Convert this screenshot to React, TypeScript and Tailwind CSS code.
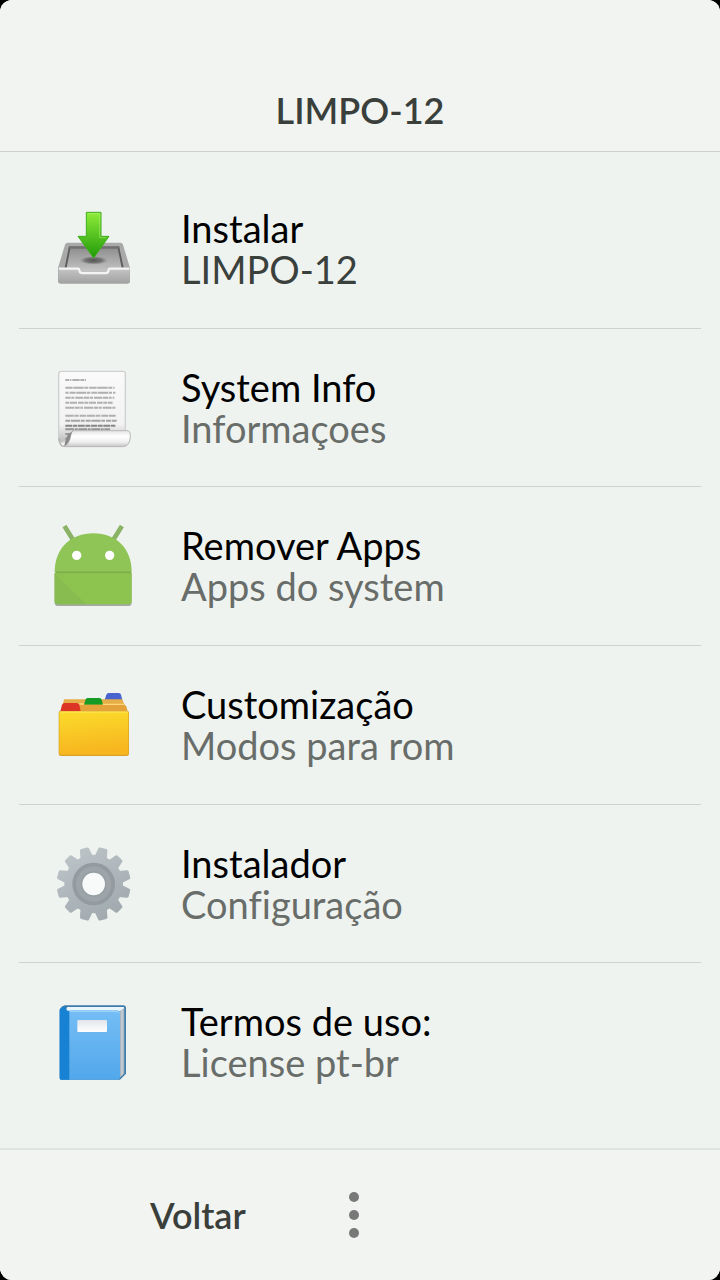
import type { ReactNode } from "react";

function InstallIcon() {
  return (
    <svg viewBox="30 15 264 264" className="size-22 shrink-0" aria-hidden="true">
      <defs>
        <linearGradient id="tray" x1="0" y1="0" x2="0" y2="1">
          <stop offset="0" stopColor="#8b8b8b" />
          <stop offset="1" stopColor="#c4c4c4" />
        </linearGradient>
        <linearGradient id="trayFront" x1="0" y1="0" x2="0" y2="1">
          <stop offset="0" stopColor="#c6c6c6" />
          <stop offset="1" stopColor="#a2a2a2" />
        </linearGradient>
        <linearGradient id="arrow" x1="0" y1="0" x2="0" y2="1">
          <stop offset="0" stopColor="#8fec3a" />
          <stop offset="1" stopColor="#1f9a08" />
        </linearGradient>
        <radialGradient id="trayShade">
          <stop offset="0" stopColor="#555" />
          <stop offset="0.6" stopColor="#666" stopOpacity="0.8" />
          <stop offset="1" stopColor="#888" stopOpacity="0" />
        </radialGradient>
      </defs>
      <path d="M82 128H242Q247 128 249 134L270 204V243Q270 251 262 251H62Q54 251 54 243V204L75 134Q77 128 82 128Z" fill="#a9a9a9" />
      <path d="M87 139H237L251 206H206L200 214H124L118 206H74Z" fill="url(#tray)" />
      <path d="M87 139L92 140L80 203H74ZM237 139L232 140L245 203H251Z" fill="#5c5c5c" />
      <path d="M87 139H237L239 146H86Z" fill="#707070" />
      <ellipse cx="161" cy="181" rx="43" ry="13" fill="url(#trayShade)" />
      <path d="M56 204H116Q120 204 121 214Q121 220 127 220H197Q203 220 203 213Q204 204 209 204H269V243Q269 250 262 250H62Q55 250 55 243Z" fill="url(#trayFront)" />
      <path d="M57 206H115Q118 207 119 214Q120 219 127 219H197Q204 219 205 213Q206 206 210 206H268" fill="none" stroke="#f4f4f4" strokeWidth="7" />
      <path d="M139 37H183V109H207L161 174L114 109H139Z" fill="url(#arrow)" stroke="#3fae1c" strokeWidth="3" strokeLinejoin="round" />
      <path d="M143 41H179V113H199" fill="none" stroke="#b6f77c" strokeOpacity="0.5" strokeWidth="3" />
    </svg>
  );
}

function DocumentIcon() {
  return (
    <svg viewBox="30 11 264 264" className="size-22 shrink-0" aria-hidden="true">
      <defs>
        <linearGradient id="curl" x1="0" y1="0" x2="0" y2="1">
          <stop offset="0" stopColor="#e4e4e4" />
          <stop offset="0.35" stopColor="#fff" />
          <stop offset="0.7" stopColor="#f0f0f0" />
          <stop offset="1" stopColor="#c4c4c4" />
        </linearGradient>
        <linearGradient id="paper" x1="0" y1="0" x2="0" y2="1">
          <stop offset="0" stopColor="#fafafa" />
          <stop offset="0.75" stopColor="#f2f2f2" />
          <stop offset="1" stopColor="#bcbcbc" />
        </linearGradient>
      </defs>
      <path d="M64 33H250Q256 33 256 39V235H85Q56 258 56 232V41Q56 33 64 33Z" fill="url(#paper)" stroke="#d0d0d0" strokeWidth="4" />
      <g fill="none" stroke="#b0b0b0" strokeWidth="6">
        <path d="M76 59H138" strokeDasharray="11 2 5 3 22 2" />
        <path d="M76 82H224" strokeDasharray="22 2 31 2 12 3" />
        <path d="M76 97H226" strokeDasharray="10 3 18 2 30 2" />
        <path d="M76 112H223" strokeDasharray="16 2 9 3 24 2" />
        <path d="M76 127H218" strokeDasharray="12 2 21 3 17 2" />
        <path d="M76 142H226" strokeDasharray="27 2 14 2 8 3" />
        <path d="M76 166H227" strokeDasharray="25 2 13 3 20 2" />
        <path d="M76 181H230" strokeDasharray="15 2 28 2 11 3" stroke="#a4a4a4" />
        <path d="M76 196H226" strokeDasharray="20 2 14 2" stroke="#858585" />
        <path d="M76 207H210" strokeDasharray="26 2 9 2" stroke="#959595" />
        <path d="M76 221H96M76 235H90" stroke="#999" />
      </g>
      <path d="M99 211H265Q272 214 271 229Q270 259 247 259H72Q87 252 91 231Q93 215 99 211Z" fill="url(#curl)" stroke="#b8b8b8" strokeWidth="3" />
      <path d="M73 258Q87 249 91 230Q93 216 99 211L85 222Q76 235 73 258Z" fill="#888" />
      <path d="M57 233Q58 259 73 258" fill="none" stroke="#b0b0b0" strokeWidth="4" />
    </svg>
  );
}

function AndroidIcon() {
  return (
    <svg viewBox="30 22 264 264" className="size-22 shrink-0" aria-hidden="true">
      <path d="M44 176H275V264Q275 274 264 274H55Q44 274 44 264Z" fill="#a5aaa2" />
      <path d="M77 40L98 74M242 40L221 74" stroke="#8bb365" strokeWidth="14" strokeLinecap="square" />
      <path d="M44 172C44 101 92 56 160 56S275 101 275 172Z" fill="#8fc556" />
      <path d="M44 175H275V259Q275 269 264 269H55Q44 269 44 259Z" fill="#8dc450" />
      <path d="M44 175L138 269H55Q44 269 44 259Z" fill="#88bb50" />
      <path d="M46 173H274" stroke="#7dae4b" strokeWidth="5" />
      <circle cx="110" cy="122" r="14" fill="#fff" />
      <circle cx="209" cy="122" r="14" fill="#fff" />
    </svg>
  );
}

function FolderIcon() {
  return (
    <svg viewBox="30 3 264 264" className="size-22 shrink-0" aria-hidden="true">
      <defs>
        <linearGradient id="folder" x1="0" y1="0" x2="0.15" y2="1">
          <stop offset="0" stopColor="#fbdc2b" />
          <stop offset="1" stopColor="#f7b51f" />
        </linearGradient>
      </defs>
      <path d="M194 60L199 44Q201 39 206 39H236Q242 39 243 44L247 60Z" fill="#4864cf" />
      <path d="M72 58H247L254 76H68Z" fill="#e6ae47" />
      <path d="M132 74L137 58Q139 54 144 54H178Q184 54 185 59L189 74Z" fill="#149b26" />
      <path d="M68 74H254Q260 76 263 95H62Z" fill="#e3a23a" />
      <path d="M70 72H132M188 73H252" stroke="#ffd778" strokeWidth="4" />
      <path d="M61 94L66 74Q68 69 74 69H110Q117 69 118 74L122 94Z" fill="#dc3526" />
      <path d="M60 93H263Q267 93 267 98V221Q267 228 260 228H63Q56 228 56 221V98Q56 93 60 93Z" fill="#d8a128" />
      <path d="M62 95H262Q265 95 265 99V219Q265 224 260 224H63Q58 224 58 219V99Q58 95 62 95Z" fill="url(#folder)" />
      <path d="M60 96H263" stroke="#ffea61" strokeWidth="3" />
    </svg>
  );
}

const TEETH = [15, 45, 75, 105, 135, 165, 195, 225, 255, 285, 315, 345];

function GearIcon() {
  return (
    <svg viewBox="30 15 264 264" className="size-22 shrink-0" aria-hidden="true">
      <defs>
        <linearGradient id="gear" gradientUnits="userSpaceOnUse" x1="100" y1="40" x2="220" y2="255">
          <stop offset="0" stopColor="#bcc4c8" />
          <stop offset="1" stopColor="#9fa8ad" />
        </linearGradient>
        <mask id="gearMask" maskUnits="userSpaceOnUse" x="30" y="15" width="264" height="264">
          <circle cx="161" cy="147" r="88" fill="#fff" />
          {TEETH.map((angle) => (
            <path
              key={angle}
              d="M142 66L147 40Q148 36 152 36H170Q174 36 175 40L180 66Z"
              transform={`rotate(${angle} 161 147)`}
              fill="#fff"
            />
          ))}
          <circle cx="161" cy="147" r="34" fill="#000" />
        </mask>
      </defs>
      <circle cx="161" cy="147" r="36" fill="#f8faf9" />
      <g mask="url(#gearMask)">
        <rect x="30" y="15" width="264" height="264" fill="url(#gear)" />
        <circle cx="161" cy="147" r="64" fill="#929b9f" />
        <circle cx="161" cy="147" r="53" fill="#9ea5a9" />
        <circle cx="161" cy="147" r="38" fill="#949da1" />
      </g>
    </svg>
  );
}

function BookIcon() {
  return (
    <svg viewBox="30 9 264 264" className="size-22 shrink-0" aria-hidden="true">
      <defs>
        <linearGradient id="cover" x1="0" y1="0" x2="0" y2="1">
          <stop offset="0" stopColor="#75bdf5" />
          <stop offset="1" stopColor="#51a8eb" />
        </linearGradient>
        <linearGradient id="label" x1="0" y1="0" x2="0" y2="1">
          <stop offset="0" stopColor="#e1e6ed" />
          <stop offset="1" stopColor="#fff" />
        </linearGradient>
      </defs>
      <path d="M74 31H251Q258 32 258 39V236L240 254H62L59 248V44Q63 34 74 31Z" fill="#3c7bab" />
      <path d="M82 36H252V42L240 49H84Q76 44 82 36Z" fill="#e9f5fb" />
      <path d="M240 48L253 39V235L240 248Z" fill="#aab7c2" />
      <path d="M246 44V241" stroke="#cbd3d9" strokeWidth="4" />
      <path d="M59 44Q63 36 76 35Q72 47 89 48V254H62Q59 254 59 250Z" fill="#1781d3" />
      <path d="M88 46H232Q240 46 240 54V245Q240 254 231 254H88Z" fill="url(#cover)" />
      <path d="M90 49H231Q237 49 237 55" fill="none" stroke="#a3d6fb" strokeWidth="3" />
      <rect x="112" y="75" width="89" height="36" rx="3" fill="url(#label)" />
    </svg>
  );
}

type Item = { title: string; detail: string; icon: ReactNode; strong?: boolean };

const ITEMS: Item[] = [
  { title: "Instalar", detail: "LIMPO-12", icon: <InstallIcon />, strong: true },
  { title: "System Info", detail: "Informaçoes", icon: <DocumentIcon /> },
  { title: "Remover Apps", detail: "Apps do system", icon: <AndroidIcon /> },
  { title: "Customização", detail: "Modos para rom", icon: <FolderIcon /> },
  { title: "Instalador", detail: "Configuração", icon: <GearIcon /> },
  { title: "Termos de uso:", detail: "License pt-br", icon: <BookIcon /> },
];

export default function App() {
  return (
    <div className="bg-black">
      <div className="flex min-h-screen flex-col overflow-hidden rounded-xl bg-[#eff3f0] font-['Lato',sans-serif] text-[38px] leading-[41px] [font-variant-ligatures:none]">
        <header className="border-b border-[#cbd0cc] bg-[#f1f4f1] pt-[90px] pb-5">
          <h1 className="text-center text-[36px] font-semibold text-[#3a3f3b]">LIMPO-12</h1>
        </header>
        <main className="flex grow flex-col px-[19px] pt-[18px] pb-[27px]">
          <ul className="flex grow flex-col divide-y divide-[#ced3cf]">
            {ITEMS.map((item) => (
              <li key={item.title} className="flex flex-1">
                <button type="button" className="flex grow items-center gap-[43px] pl-[31px] text-left">
                  {item.icon}
                  <span className="flex flex-col">
                    <span className="text-black">{item.title}</span>
                    <span className={item.strong ? "text-[#3a403c]" : "text-[#686d69]"}>{item.detail}</span>
                  </span>
                </button>
              </li>
            ))}
          </ul>
        </main>
        <footer className="flex h-[132px] items-center gap-[72px] border-t-2 border-[#dfe4e0] bg-[#f1f4f1] pl-[150px]">
          <button type="button" className="text-[36px] font-semibold text-[#3a3f3b]">Voltar</button>
          <button type="button" aria-label="Menu" className="flex size-[72px] items-center justify-center bg-[#f2f4f2]">
            <svg viewBox="0 0 10 46" className="h-[46px] w-[10px]" fill="#787878" aria-hidden="true">
              <circle cx="5" cy="5" r="5" />
              <circle cx="5" cy="23" r="5" />
              <circle cx="5" cy="41" r="5" />
            </svg>
          </button>
        </footer>
      </div>
    </div>
  );
}
